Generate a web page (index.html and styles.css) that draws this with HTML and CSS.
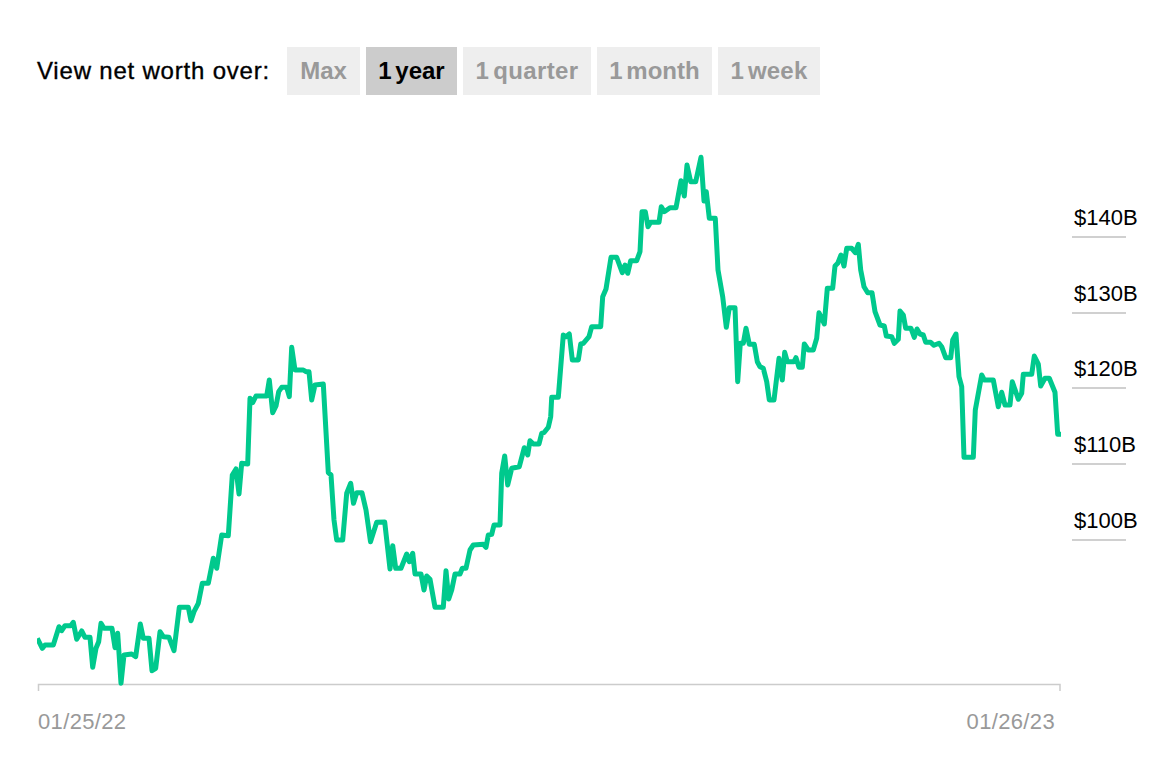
FILE: index.html
```html
<!DOCTYPE html>
<html lang="en">
<head>
<meta charset="utf-8">
<title>Net worth</title>
<link rel="stylesheet" href="styles.css">
</head>
<body>
<main class="page">
  <div class="controls">
    <span class="controls-label">View net worth over:</span>
    <button class="range range-max">Max</button>
    <button class="range range-year range-active">1 year</button>
    <button class="range range-quarter">1 quarter</button>
    <button class="range range-month">1 month</button>
    <button class="range range-week">1 week</button>
  </div>
  <div class="chart-row">
    <svg class="chart" width="1026" height="556" viewBox="37 140 1026 556">
      <path class="axis" d="M38.5 691V684.5H1060V691"/>
      <polyline class="line" points="37.3,638.3 42.3,648.3 45,645 53.3,645 59,626.7 61.7,630.7 65,625.7 70.7,625.7 73.3,622.3 76.7,639.3 81.7,631 85,637.3 90,637.3 92.7,667.3 96,648.3 98.7,641.7 101,623.3 104,628.3 112,628.3 115,647.7 117.7,633.3 121,683.3 124,655 131.7,654 135.7,656.7 140.3,624 143.3,638.3 149,638.3 152,670.7 155.7,668.3 160,631.7 163.3,636.7 169,637.3 174,650.7 179.3,607.3 188.3,607.3 191,620.7 194,611.7 198.3,603.3 202.3,583.3 208.3,583.3 213.3,558.3 216.7,568.3 221.7,535 228.3,535.7 232.3,475 236,469 239,494 241.7,463.3 247.7,464 250,398.3 252.7,402.7 256,396 266.7,396 269.3,380 272.7,412.7 276,406 278.7,391.7 281.7,387.3 286.7,387.3 289.3,396.7 291.7,347.3 295,370 303.3,370 306,371.7 309,371.7 311.7,400 315,385 323.3,384 328.3,472.7 331,475 334,520 336.7,540 342.7,540 346.7,493.3 350.7,483.3 353.5,503.3 356.7,492.7 362,492.7 366,510 370.5,541.7 376.7,522.3 384.7,522 390,569 392.7,545.7 395.7,568.3 401,568.3 406.7,554 409.3,561.7 412.7,553.3 415,574 421,574 424,590 426.7,576 430,579.3 435,607.3 443.3,607.3 446,570.7 448.7,599 451.7,590 455,574 460,574 462.3,568.3 466,568.3 470,550 473.3,545 483.3,544.3 486,547.3 488.3,535 491.7,534.3 494,525 500,525 501.7,473.3 504.7,456 507.7,485 511.7,468.3 519.3,466.7 524.3,447.7 527.7,455 530,440.7 533.3,444 539,444 541.7,433.3 544.3,432.3 548.3,427.3 550.7,416.7 551.7,397.3 558.3,397.3 563.3,335 566,336.7 569.3,334 572.3,360 578.3,360 580.7,344 583.3,343.3 589,336.7 591.7,326.7 600.7,326.7 602.7,296.7 606,289 611,257.3 616.7,257.3 622.3,272.7 625,265 627.7,273.3 630.7,260.7 636.7,260.7 640,251.7 642,211.7 645.3,211.7 648,226.7 650.7,222.3 659,222.3 661.3,206.7 664.3,211.7 670,207.7 676,207.7 681,180.7 684.3,196 687,165 690.7,181.7 695.7,181.7 701,157.3 704,201 706.3,191.7 709.3,218.3 715.3,218.3 718,270 722.7,296.7 726.3,327.3 729.3,307.7 735,307.7 737.7,381.7 740.3,343.3 743.3,343.3 746,328.3 749.3,344.3 754.3,344.3 757.3,361.7 760,366.7 763.3,368.3 766.7,381.7 769.3,400 774,400 779,358.3 782.3,380 784.7,352.3 787.3,361.7 794,361.7 796,357.7 799,367.3 802.3,367.3 804.3,344 808.3,350 813.3,350 816.7,338.3 819,312.7 824.3,324 827.3,288.3 832.7,288.3 835,266 837.7,263.3 841,255 844,266 846.7,248.3 851.7,248.3 855.3,252.7 858.3,244.3 860.7,270 864,286.7 867.7,292.7 872,292.7 875,311.7 880,325 884.3,326 886.3,336 891.7,336.7 894.3,343.3 898.3,339.3 900,311 903.3,315 905.7,328.3 911,328.3 914.3,337.3 917,329 920,334 923.3,335 925.7,342.3 930.7,342.3 934,345.3 939,343.3 941.7,346.7 945.7,357.7 950.7,357.7 952.7,340 956,334 959,376.7 961.7,386.7 964,457.3 973.3,457.3 975.3,410 981.7,375 984.3,380 993.3,380 998.3,406.7 1001.7,392.3 1005,405 1010,405 1012.3,381.7 1018.3,399.3 1021.7,393.3 1023.3,374.3 1031.7,374.3 1034.3,356 1038.3,364 1040.7,386 1045,378.3 1049.3,378.3 1055,392.3 1057.7,434.3 1061,434.3"/>
    </svg>
    <ul class="y-axis">
      <li class="y-tick">$140B</li>
      <li class="y-tick">$130B</li>
      <li class="y-tick">$120B</li>
      <li class="y-tick">$110B</li>
      <li class="y-tick">$100B</li>
    </ul>
  </div>
  <div class="x-axis">
    <span>01/25/22</span>
    <span>01/26/23</span>
  </div>
</main>
</body>
</html>
```
FILE: styles.css
```css
html, body {
  margin: 0;
  padding: 0;
  background: #fff;
}
body {
  font-family: "Liberation Sans", Arial, sans-serif;
  color: #000;
  overflow: hidden;
}
.page {
  padding: 47px 0 0 37px;
}
.controls {
  display: flex;
  align-items: center;
  height: 48px;
}
.controls-label {
  font-size: 24px;
  letter-spacing: 0.8px;
  width: 250px;
  flex: none;
  white-space: nowrap;
  -webkit-text-stroke: 0.35px #000;
}
.range {
  height: 48px;
  margin: 0 6px 0 0;
  padding: 0;
  border: 0;
  border-radius: 0;
  background: #eee;
  color: #999;
  font: bold 24px "Liberation Sans", Arial, sans-serif;
  word-spacing: -3px;
  flex: none;
}
.range-max { width: 73px; }
.range-year { width: 91px; }
.range-quarter { width: 128px; letter-spacing: 0.35px; }
.range-month { width: 115px; }
.range-week { width: 102px; letter-spacing: 0.2px; }
.range-active {
  background: #ccc;
  color: #000;
}
.chart-row {
  display: flex;
  align-items: flex-start;
  margin-top: 45px;
}
.chart {
  display: block;
  flex: none;
}
.y-axis {
  list-style: none;
  margin: 22px 0 0 9px;
  padding: 0;
  width: 54px;
}
.y-tick {
  box-sizing: border-box;
  height: 75.75px;
  border-bottom: 2px solid #d0d0d0;
  display: flex;
  align-items: flex-end;
  padding: 0 0 5px 2px;
  font-size: 22px;
  line-height: 26px;
  white-space: nowrap;
}
.x-axis {
  display: flex;
  justify-content: space-between;
  box-sizing: border-box;
  width: 1018px;
  padding-left: 1px;
  margin-top: 13px;
  font-size: 22px;
  line-height: 26px;
  letter-spacing: 0.35px;
  color: #999;
}
.axis {
  fill: none;
  stroke: #ccc;
  stroke-width: 1.5;
}
.line {
  fill: none;
  stroke: #00c98d;
  stroke-width: 5;
  stroke-linejoin: round;
}
```
